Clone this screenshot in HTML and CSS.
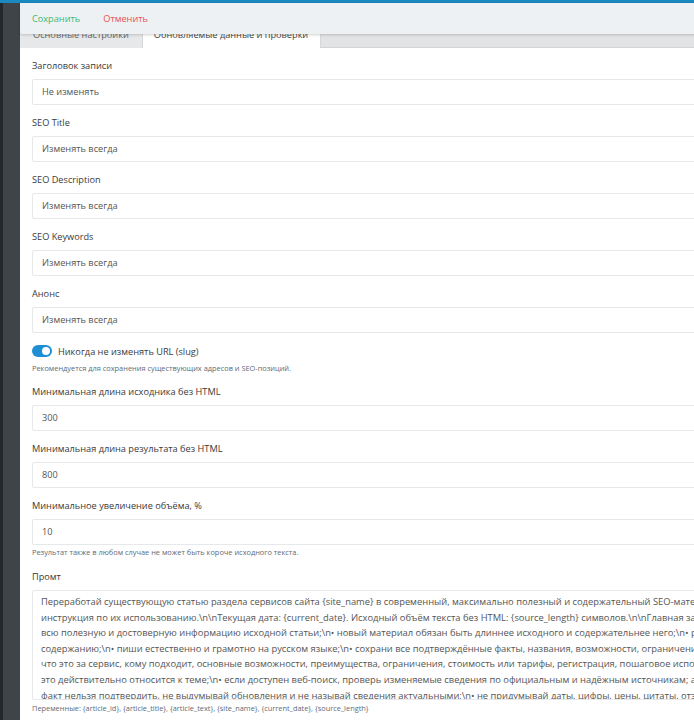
FILE: index.html
```html
<!DOCTYPE html>
<html lang="ru">
<head>
<meta charset="utf-8">
<title>Настройки</title>
<link rel="stylesheet" href="styles.css">
</head>
<body>
<div class="topbar"></div>
<div class="layout">
  <aside class="sidebar"></aside>
  <main class="main">
    <div class="actions">
      <button class="btn btn-save" type="button">Сохранить</button>
      <button class="btn btn-cancel" type="button">Отменить</button>
    </div>
    <nav class="tabs">
      <span class="tab">Основные настройки</span>
      <span class="tab tab-active">Обновляемые данные и проверки</span>
    </nav>
    <section class="panel">
      <div class="field">
        <label class="label">Заголовок записи</label>
        <div class="input">Не изменять</div>
      </div>
      <div class="field">
        <label class="label">SEO Title</label>
        <div class="input">Изменять всегда</div>
      </div>
      <div class="field">
        <label class="label">SEO Description</label>
        <div class="input">Изменять всегда</div>
      </div>
      <div class="field">
        <label class="label">SEO Keywords</label>
        <div class="input">Изменять всегда</div>
      </div>
      <div class="field">
        <label class="label">Анонс</label>
        <div class="input">Изменять всегда</div>
      </div>
      <div class="switch-row">
        <span class="switch"><span class="knob"></span></span>
        <span class="switch-label">Никогда не изменять URL (slug)</span>
      </div>
      <div class="help">Рекомендуется для сохранения существующих адресов и SEO-позиций.</div>
      <div class="field">
        <label class="label">Минимальная длина исходника без HTML</label>
        <div class="input">300</div>
      </div>
      <div class="field">
        <label class="label">Минимальная длина результата без HTML</label>
        <div class="input">800</div>
      </div>
      <div class="field field-tight">
        <label class="label">Минимальное увеличение объёма, %</label>
        <div class="input">10</div>
      </div>
      <div class="help help-2">Результат также в любом случае не может быть короче исходного текста.</div>
      <div class="field field-tight">
        <label class="label">Промт</label>
        <div class="prompt">
          <div class="pl">Переработай существующую статью раздела сервисов сайта {site_name} в современный, максимально полезный и содержательный SEO-материал для пользователей, которым нужна подробная</div>
          <div class="pl">инструкция по их использованию.\n\nТекущая дата: {current_date}. Исходный объём текста без HTML: {source_length} символов.\n\nГлавная задача: сохранить</div>
          <div class="pl">всю полезную и достоверную информацию исходной статьи;\n• новый материал обязан быть длиннее исходного и содержательнее него;\n• расширяй по</div>
          <div class="pl">содержанию;\n• пиши естественно и грамотно на русском языке;\n• сохрани все подтверждённые факты, названия, возможности, ограничения и</div>
          <div class="pl">что это за сервис, кому подходит, основные возможности, преимущества, ограничения, стоимость или тарифы, регистрация, пошаговое использование,</div>
          <div class="pl">это действительно относится к теме;\n• если доступен веб-поиск, проверь изменяемые сведения по официальным и надёжным источникам; а если</div>
          <div class="pl">факт нельзя подтвердить, не выдумывай обновления и не называй сведения актуальными;\n• не придумывай даты, цифры, цены, цитаты, отзывы</div>
        </div>
      </div>
      <div class="help">Переменные: {article_id}, {article_title}, {article_text}, {site_name}, {current_date}, {source_length}</div>
    </section>
  </main>
</div>
</body>
</html>
```
FILE: styles.css
```css
* { box-sizing: border-box; }
html, body { margin: 0; padding: 0; }
body {
  width: 694px;
  height: 720px;
  overflow: hidden;
  background: #3d4246;
  font-family: "Open Sans", "Noto Sans", sans-serif;
  color: #3a3a3a;
}
.topbar {
  height: 3px;
  background: #1b88bf;
}
.layout {
  display: flex;
  width: 820px;
}
.sidebar {
  width: 20px;
  flex: none;
  background: #3f4448;
  border-left: 3px solid #25282b;
}
.main {
  position: relative;
  flex: 1;
  background: #e2e3e5;
}
.actions {
  position: absolute;
  top: 0;
  left: 0;
  right: 0;
  height: 31px;
  z-index: 2;
  display: flex;
  align-items: center;
  gap: 23px;
  padding-left: 12px;
  background: #eef1f4;
  border-bottom-left-radius: 2px;
  box-shadow: 0 1px 3px rgba(0,0,0,0.18);
}
.btn {
  border: 0;
  background: none;
  padding: 0;
  font-family: inherit;
  font-size: 9.2px;
  cursor: pointer;
}
.btn-save { color: #3cb86e; }
.btn-cancel { color: #e8534f; }
.tabs {
  display: flex;
  align-items: flex-end;
  height: 45px;
  border-bottom: 1px solid #d3d4d6;
}
.tab {
  height: 27px;
  margin-bottom: -1px;
  padding: 0 13px 0 13px;
  display: flex;
  align-items: center;
  font-size: 9.2px;
  color: #666;
  background: #e7e8e9;
  border-right: 1px solid #d6d7d9;
}
.tab-active {
  background: #fff;
  color: #444;
  padding: 0 12px 0 11px;
}
.panel {
  background: #fff;
  padding: 9px 12px 20px 12px;
  min-height: 700px;
}
.field { margin-bottom: 9px; }
.field-tight { margin-bottom: 0; }
.label {
  display: block;
  font-size: 9.2px;
  line-height: 18px;
  color: #3a3a3a;
  margin-bottom: 4px;
}
.input {
  height: 26px;
  border: 1px solid #e6e8ea;
  border-radius: 2px;
  padding: 0 9px;
  font-size: 9.2px;
  line-height: 24px;
  color: #555;
  background: #fff;
}
.switch-row {
  display: flex;
  align-items: center;
  gap: 6px;
  height: 18px;
}
.switch {
  width: 20px;
  height: 12px;
  border-radius: 6px;
  background: #1d8fd5;
  display: flex;
  justify-content: flex-end;
  align-items: center;
  padding: 2px;
}
.knob {
  width: 8px;
  height: 8px;
  border-radius: 50%;
  background: #fff;
}
.switch-label {
  font-size: 9.2px;
  color: #3a3a3a;
}
.help {
  font-size: 7.4px;
  line-height: 12px;
  color: #5f6b78;
  margin: 2px 0 9px;
}
.help-2 { margin: 1px 0 10px; }
.prompt {
  height: 110px;
  overflow: hidden;
  border: 1px solid #e6e8ea;
  border-radius: 2px;
  padding: 3px 8px;
  font-size: 9.35px;
  line-height: 15.6px;
  color: #555;
}
.pl { white-space: nowrap; }
```
